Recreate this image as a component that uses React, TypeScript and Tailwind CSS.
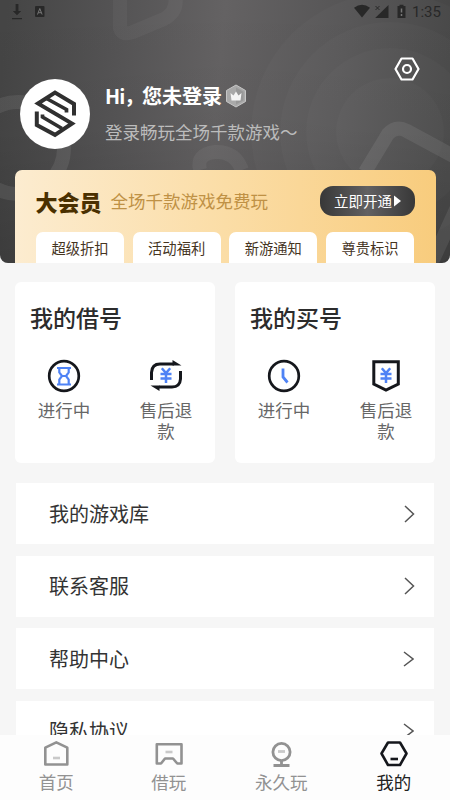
import React from 'react';

function HeaderArt() {
  return (
    <svg className="absolute inset-0" width="450" height="263" viewBox="0 0 450 263" fill="none">
      <defs>
        <linearGradient id="headBg" x1="0" y1="90" x2="450" y2="130" gradientUnits="userSpaceOnUse">
          <stop offset="0" stopColor="#454545" />
          <stop offset="0.25" stopColor="#555455" />
          <stop offset="0.48" stopColor="#646263" />
          <stop offset="0.75" stopColor="#565556" />
          <stop offset="1" stopColor="#454545" />
        </linearGradient>
        <linearGradient id="headShade" x1="0" y1="0" x2="0" y2="263" gradientUnits="userSpaceOnUse">
          <stop offset="0" stopColor="#000" stopOpacity="0" />
          <stop offset="0.5" stopColor="#000" stopOpacity="0.03" />
          <stop offset="1" stopColor="#000" stopOpacity="0.16" />
        </linearGradient>
      </defs>
      <rect width="450" height="263" fill="url(#headBg)" />
      <rect width="450" height="263" fill="url(#headShade)" />
      <g fill="#fff" fillOpacity="0.02">
        <circle cx="390" cy="132" r="139" />
        <circle cx="390" cy="132" r="110" />
        <circle cx="390" cy="132" r="84" />
        <circle cx="390" cy="132" r="54" />
      </g>
      <g stroke="#fff" strokeOpacity="0.08" strokeWidth="14" strokeLinejoin="round">
        <circle cx="18" cy="148" r="46" />
        <path d="M120 -10V28Q122 36 133 32L164 19Q180 10 174 -8" strokeOpacity="0.04" />
        <path d="M200 170Q196 154 215 152Q235 151 242 170" strokeOpacity="0.05" />
        <path d="M365 172L388 134Q396 125 407 131L470 165M458 205L432 262" />
      </g>
    </svg>
  );
}

function StatusBar() {
  return (
    <div className="flex h-[23px] items-center justify-between pl-[11px] pr-[8px] text-[#282828]">
      <svg width="36" height="17" viewBox="0 0 36 17" fill="currentColor">
        <path d="M4.6 1h2.8v7h2.800L6 12.200 1.800 8h2.800zM1 15h10v1.200H1z" />
        <rect x="24" y="3" width="9.5" height="11" rx="1" />
        <path d="m26.500 11.500 2.300-6 2.300 6M27.300 9.700h3" stroke="#777" fill="none" />
      </svg>
      <div className="flex items-center">
        <svg width="54" height="16" viewBox="0 0 54 16" fill="currentColor">
          <path d="M0 3.700Q8-2.400 16 3.700L8 13.500z" />
          <path d="M34.500 1v13H21.200z" />
          <path d="m21.500 2 4 4m0-4-4 4" stroke="currentColor" strokeWidth="1" />
          <path d="M43.500 2h2V.7h4V2h2v12h-8z" />
          <path d="M47.500 4.500v4m0 1.500v2" stroke="#777" strokeWidth="1.500" />
        </svg>
        <span className="ml-[4px] w-[30px] whitespace-nowrap font-['Roboto'] text-[15px] leading-[22px]">1:35</span>
      </div>
    </div>
  );
}

function Logo() {
  return (
    <svg width="70" height="70" viewBox="0 0 70 70" fill="none" stroke="#303030" strokeWidth="4">
      <path d="M54 36.500V25L35 13.500 18 24.500 52 44.500 35 55.800 16.800 46V32.500" />
      <path d="M26.500 19.500 46.500 30.500v3M22.500 35.500v2.500L42 49.500" strokeWidth="3.700" />
    </svg>
  );
}

function CrownBadge() {
  return (
    <svg width="22" height="24" viewBox="0 0 22 24">
      <path d="M11 1 20.500 6.500v11L11 23 1.500 17.500v-11z" fill="#a9a9a9" stroke="#c6c6c6" strokeWidth="1" />
      <path d="m11 3.500 7.500 4.300v8.400L11 20.500" fill="#989898" />
      <path d="m5.500 9 3 2.500L11 7.500l2.500 4 3-2.500-1 7.500h-9z" fill="#f5f5f5" />
    </svg>
  );
}

const perks = ['超级折扣', '活动福利', '新游通知', '尊贵标识'];

function MemberCard() {
  return (
    <div className="ml-[14.5px] flex h-[93px] w-[421px] flex-col justify-between rounded-t-[7px] bg-gradient-to-r from-[#fcecd0] via-[#fbdda6] to-[#f8cc7d] pt-[16px]">
      <div className="flex h-[30px] items-center pl-[21px] pr-[20.500px]">
        <span className="w-[75px] whitespace-nowrap text-[22px] font-black leading-[30px] text-[#4a3000]">大会员</span>
        <span className="whitespace-nowrap text-[17.5px] text-[#bf9145]">全场千款游戏免费玩</span>
        <button className="ml-auto flex h-[30px] w-[95px] items-center justify-center gap-[2px] rounded-[13px] bg-gradient-to-r from-[#383838] via-[#626162] to-[#383838] text-[14.5px] text-white">
          立即开通
          <svg width="7" height="12" viewBox="0 0 7 12" fill="#fff"><path d="M0 .5 7 6 0 11.500z" /></svg>
        </button>
      </div>
      <div className="flex justify-between pl-[21.500px] pr-[21.500px]">
        {perks.map((p) => (
          <span key={p} className="flex h-[31px] w-[88px] items-center justify-center rounded-t-[7px] bg-white text-[14.3px] font-normal text-[#46351f]">{p}</span>
        ))}
      </div>
    </div>
  );
}

const yuan = <path d="m12.800 9.200 4.200 4.800 4.200-4.800M11.500 15h11M11.500 19.500h11M17 14v10" stroke="#4f83f5" strokeWidth="2.500" />;

function HourglassIcon() {
  return (
    <svg width="34" height="34" viewBox="0 0 34 34" fill="none">
      <circle cx="17" cy="17" r="14.800" stroke="#15171c" strokeWidth="2.700" />
      <path d="M10 9h14M10 25.500h14M12.300 9v4.500l2.700 3.500-2.700 3.500v5M21.700 9v4.500L19 17l2.700 3.500v5M14.500 17h5" stroke="#4f83f5" strokeWidth="2.200" />
    </svg>
  );
}

function RefundIcon() {
  return (
    <svg width="34" height="34" viewBox="0 0 34 34" fill="none">
      <path d="M2.500 21v-7.500Q3 5 11 5h14M31.500 12v8q-.5 8-8.500 8H10" stroke="#15171c" strokeWidth="3" />
      <path d="M23.500 1 32.500 6.500h-9zM10.500 32 1.500 26.500h9z" fill="#15171c" />
      {yuan}
    </svg>
  );
}

function ClockIcon() {
  return (
    <svg width="34" height="34" viewBox="0 0 34 34" fill="none">
      <circle cx="17" cy="17" r="14.800" stroke="#15171c" strokeWidth="2.700" />
      <path d="M16 9.500v8.500l4.500 5.500" stroke="#4f83f5" strokeWidth="2.800" />
    </svg>
  );
}

function ShieldIcon() {
  return (
    <svg width="34" height="34" viewBox="0 0 34 34" fill="none">
      <path d="M4.800 2.800h24.500V25L17 31 4.800 25z" stroke="#15171c" strokeWidth="3" />
      {yuan}
    </svg>
  );
}

function AccountCard({ title, first, second }: { title: string; first: React.ReactNode; second: React.ReactNode }) {
  return (
    <section className="h-[181px] w-[200px] rounded-[6px] bg-white pt-[18px]">
      <h2 className="pl-[15px] text-[23px] font-medium leading-[34px] text-[#2c2c2c]">{title}</h2>
      <div className="mt-[25px] flex justify-between pl-[19px] pr-[19px] text-[17.500px] leading-[21px] text-[#676767]">
        <div className="flex w-[60px] flex-col items-center">
          {first}
          <span className="mt-[6px]">进行中</span>
        </div>
        <div className="flex w-[60px] flex-col items-center text-center">
          {second}
          <span className="mt-[6px]">售后退<br />款</span>
        </div>
      </div>
    </section>
  );
}

const rows = ['我的游戏库', '联系客服', '帮助中心', '隐私协议'];

function HomeIcon() {
  return (
    <svg width="28" height="28" viewBox="0 0 28 28" fill="none" stroke="#929292" strokeWidth="2.600">
      <path d="M3.300 7.700 14.300 2.300l11 5.400v16.800h-22z" strokeLinejoin="round" />
      <path d="M11 18h7" stroke="#c9c9c9" />
    </svg>
  );
}
function PadIcon() {
  return (
    <svg width="28" height="28" viewBox="0 0 28 28" fill="none" stroke="#929292" strokeWidth="2.600">
      <path d="M1.800 4.300h24.700v19.200h-4.200L18 18.500h-8L6 23.500H1.800z" strokeLinejoin="round" />
      <path d="M10.500 12h7" stroke="#c9c9c9" />
    </svg>
  );
}
function CamIcon() {
  return (
    <svg width="28" height="28" viewBox="0 0 28 28" fill="none" stroke="#929292" strokeWidth="2.800">
      <circle cx="14.500" cy="12" r="8.600" />
      <path d="M14.500 20.500v5M6.500 25.500h16" />
      <path d="M11 11.500h7" stroke="#c9c9c9" />
    </svg>
  );
}
function MineIcon() {
  return (
    <svg width="28" height="28" viewBox="0 0 28 28" fill="none" stroke="#15171c" strokeWidth="2.600">
      <path d="M8 2.500h12L26.500 13.500 20 25H8L1.500 13.500z" strokeLinejoin="round" />
      <path d="M10.500 19h7.500" />
    </svg>
  );
}

const tabs = [
  { label: '首页', icon: <HomeIcon /> },
  { label: '借玩', icon: <PadIcon /> },
  { label: '永久玩', icon: <CamIcon /> },
  { label: '我的', icon: <MineIcon />, active: true },
];

export default function App() {
  return (
    <div className="flex h-[800px] w-[450px] flex-col overflow-hidden bg-[#f6f6f6] font-['Noto_Sans_CJK_SC','Noto_Sans',sans-serif]">
      <header className="relative h-[263px] shrink-0 overflow-hidden rounded-b-[8px]">
        <HeaderArt />
        <div className="relative flex h-full flex-col">
          <StatusBar />
          <div className="mt-[33px] flex h-[93px] pl-[20px] pr-[30px]">
            <div className="h-[70px] w-[70px] self-end overflow-hidden rounded-full bg-white"><Logo /></div>
            <div className="ml-[15px] pt-[25px]">
              <div className="flex items-center text-[20px] font-bold leading-[30px] text-white">
                <span className="w-[37px] whitespace-nowrap tracking-[-1px]">Hi，</span>
                <span className="whitespace-nowrap">您未登录</span>
                <span className="-mt-[1px] ml-[3px]"><CrownBadge /></span>
              </div>
              <p className="mt-[8px] whitespace-nowrap text-[17.500px] leading-[26px] text-[#bcbcbc]">登录畅玩全场千款游戏～</p>
            </div>
            <svg className="ml-auto" width="26" height="26" viewBox="0 0 26 26" fill="none" stroke="#fff" strokeWidth="2.200">
              <path d="M7.500 2.500h11L24.500 13l-6 10.500h-11L1.500 13z" strokeLinejoin="round" />
              <circle cx="13" cy="13" r="4" />
            </svg>
          </div>
          <div className="mt-auto"><MemberCard /></div>
        </div>
      </header>

      <main className="flex min-h-0 flex-1 flex-col overflow-hidden px-[15px] pt-[19px]">
        <div className="flex shrink-0 justify-between">
          <AccountCard title="我的借号" first={<HourglassIcon />} second={<RefundIcon />} />
          <AccountCard title="我的买号" first={<ClockIcon />} second={<ShieldIcon />} />
        </div>
        <div className="mt-[20.300px] flex flex-col gap-[11.500px] px-[1px]">
          {rows.map((r, i) => (
            <div key={r} className="flex h-[61px] shrink-0 items-center justify-between bg-white pl-[33px] pr-[19px] text-[20px] leading-[30px] text-[#333]">
              <span>{r}</span>
              <svg className={i > 1 ? 'mr-[1px]' : ''} width="11" height="18" viewBox="0 0 11 18" fill="none" stroke="#555" strokeWidth="1.500">
                <path d={i > 1 ? 'M1 2 10 9 1 16' : 'M1 1 9.500 9 1 17'} />
              </svg>
            </div>
          ))}
        </div>
      </main>

      <nav className="grid h-[65px] shrink-0 grid-cols-4 bg-[#fdfdfd] pt-[5px]">
        {tabs.map((t) => (
          <div key={t.label} className={t.active ? 'flex flex-col items-center text-[#222]' : 'flex flex-col items-center text-[#929292]'}>
            {t.icon}
            <span className="text-[17.500px] leading-[27px]">{t.label}</span>
          </div>
        ))}
      </nav>
    </div>
  );
}
